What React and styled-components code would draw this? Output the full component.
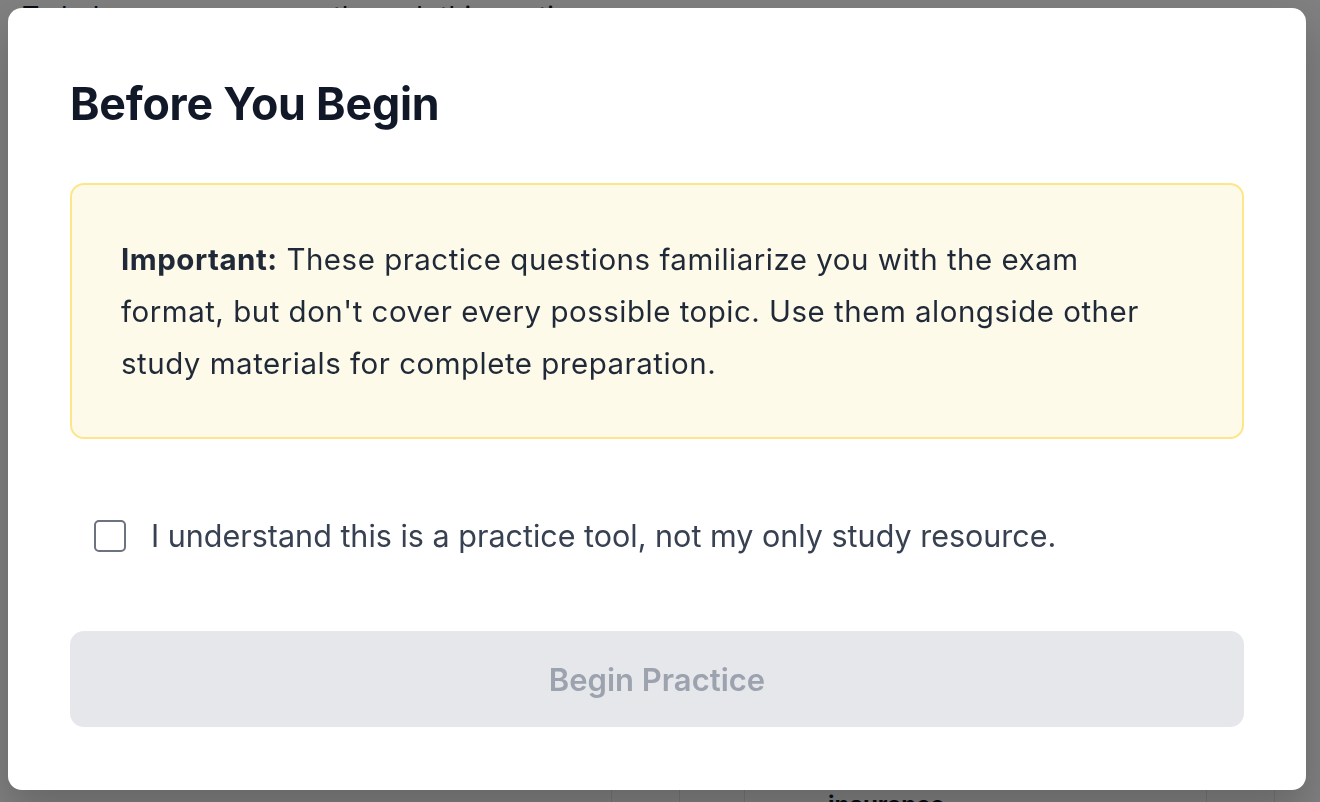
import React, { useState } from 'react';
import styled, { createGlobalStyle } from 'styled-components';

const GlobalStyle = createGlobalStyle`
  html, body {
    margin: 0;
    padding: 0;
    background: #ffffff;
  }
  body {
    font-family: Inter, "Noto Sans", "Liberation Sans", sans-serif;
    -webkit-font-smoothing: antialiased;
  }
`;

// page behind the dialog
const Page = styled.div`
  height: 802px;
  overflow: hidden;
`;

const PageIntro = styled.p`
  margin: 0 0 0 22px;
  padding-top: 2px;
  font-size: 27px;
  line-height: 30px;
  color: #111827;
`;

const TableArea = styled.div`
  display: grid;
  grid-template-columns: 612px 68px 65px 462px 68px 1fr;
  height: 772px;
`;

const TableCol = styled.div`
  min-width: 0;
  border-right: ${(p) => (p.$last ? 'none' : '1px solid #e5e7eb')};
  padding: 758px 0 0 ${(p) => (p.$text ? '83px' : '0')};
  font-weight: 700;
  font-size: 24px;
  line-height: 30px;
  color: #111827;
`;

const Overlay = styled.div`
  position: fixed;
  inset: 0;
  background: rgba(0, 0, 0, 0.5);
  display: flex;
  align-items: flex-start;
  justify-content: flex-start;
  padding: 8px 0 0 8px;
`;

const Dialog = styled.div`
  width: 1298px;
  height: 782px;
  box-sizing: border-box;
  background: #ffffff;
  border-radius: 14px;
  padding: 66px 62px 62px;
  display: flex;
  flex-direction: column;
  box-shadow: 0 20px 40px rgba(0, 0, 0, 0.2);
`;

const Title = styled.h2`
  margin: 0;
  font-size: 44.7px;
  line-height: 60px;
  font-weight: 700;
  color: #111827;
  letter-spacing: -0.2px;
`;

const Notice = styled.div`
  margin-top: 49px;
  background: #fefae9;
  border: 2px solid #fde68a;
  border-radius: 14px;
  padding: 48px 90px 48px 49px;
  font-size: 29.5px;
  line-height: 52px;
  letter-spacing: 0.5px;
  color: #1f2937;

  strong {
    font-weight: 700;
  }
`;

const CheckRow = styled.label`
  margin-top: 78px;
  padding-left: 24px;
  display: flex;
  align-items: center;
  gap: 25px;
  font-size: 30.5px;
  color: #374151;
  cursor: pointer;
`;

const Box = styled.input`
  appearance: none;
  margin: 0;
  width: 32px;
  height: 32px;
  border: 2px solid #6b7280;
  border-radius: 5px;
  background: #ffffff;
  flex-shrink: 0;

  &:checked {
    background: #2563eb;
    border-color: #2563eb;
  }
`;

const StartButton = styled.button`
  margin-top: 77px;
  height: 96px;
  border: none;
  border-radius: 14px;
  background: ${(p) => (p.disabled ? '#e5e7eb' : '#2563eb')};
  color: ${(p) => (p.disabled ? '#9ca3af' : '#ffffff')};
  font-family: inherit;
  font-size: 31px;
  font-weight: 600;
  cursor: ${(p) => (p.disabled ? 'not-allowed' : 'pointer')};
`;

export default function App() {
  const [agreed, setAgreed] = useState(false);
  const cols = ['', '', '', 'insurance', '', ''];

  return (
    <>
      <GlobalStyle />
      <Page>
        <PageIntro>To help you prepare, go through this section</PageIntro>
        <TableArea>
          {cols.map((c, i) => (
            <TableCol key={i} $text={!!c} $last={i === cols.length - 1}>
              {c}
            </TableCol>
          ))}
        </TableArea>
      </Page>

      <Overlay>
        <Dialog>
          <Title>Before You Begin</Title>
          <Notice>
            <strong>Important:</strong> These practice questions familiarize you with the exam
            format, but don't cover every possible topic. Use them alongside other study
            materials for complete preparation.
          </Notice>
          <CheckRow>
            <Box type="checkbox" checked={agreed} onChange={(e) => setAgreed(e.target.checked)} />
            I understand this is a practice tool, not my only study resource.
          </CheckRow>
          <StartButton disabled={!agreed}>Begin Practice</StartButton>
        </Dialog>
      </Overlay>
    </>
  );
}
